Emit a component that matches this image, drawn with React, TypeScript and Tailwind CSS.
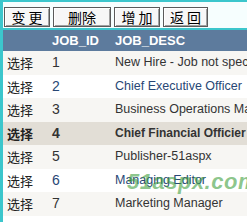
import React from 'react';

const jobs = [
  { id: 1, desc: 'New Hire - Job not specified' },
  { id: 2, desc: 'Chief Executive Officer' },
  { id: 3, desc: 'Business Operations Manager' },
  { id: 4, desc: 'Chief Financial Officier' },
  { id: 5, desc: 'Publisher-51aspx' },
  { id: 6, desc: 'Managing Editor' },
  { id: 7, desc: 'Marketing Manager' },
  { id: 8, desc: 'Productions Manager' },
];

const buttons = [
  { label: '变 更', w: 'w-[46px]' },
  { label: '删除', w: 'w-[58px]' },
  { label: '增 加', w: 'w-[46px]' },
  { label: '返 回', w: 'w-[45px]' },
];

const selectedId = 4;

export default function App() {
  return (
    <div className="relative w-[247px] h-[222px] overflow-hidden bg-white font-['Liberation_Sans','Noto_Sans_CJK_SC',sans-serif] text-[13px]">
      <div className="border-l-[3px] border-[#3cc6cc] h-full">
        {/* Toolbar */}
        <div className="border-t-2 border-b-2 border-[#3cc6cc] bg-[#f6fefe] h-[30px] flex items-start gap-[3px] pl-[1px] pt-[5px]">
          {buttons.map(b => (
            <button
              key={b.label}
              className={`${b.w} h-[20px] flex items-center justify-center bg-[#f7f7f7] border border-[#5a5a5a] shadow-[inset_1px_1px_0_#ffffff,inset_-1px_-1px_0_#a0a0a0] text-[14px] leading-none text-black font-['Noto_Sans_CJK_SC',sans-serif]`}
            >
              {b.label}
            </button>
          ))}
        </div>

        {/* Grid */}
        <div className="grid grid-cols-[45px_64px_1fr] h-[21px] bg-[#5d7b9d] text-white font-bold items-center">
          <span />
          <span className="pl-[4px]">JOB_ID</span>
          <span className="pl-[3px]">JOB_DESC</span>
        </div>
        {jobs.map((job, i) => {
          const selected = job.id === selectedId;
          const bg = selected ? 'bg-[#e2ded6] font-bold text-[#333333]' : i % 2 === 0 ? 'bg-[#f7f6f3] text-[#333333]' : 'bg-white text-[#284775]';
          return (
            <div key={job.id} className={`grid grid-cols-[45px_64px_1fr] h-[23.5px] items-center ${bg}`}>
              <span className="pl-[4px] text-[#222] font-['Noto_Sans_CJK_SC',sans-serif]">选择</span>
              <span className="pl-[4px] text-[14px]">{job.id}</span>
              <span className={`pl-[3px] whitespace-nowrap overflow-hidden ${selected ? 'text-[12px]' : 'text-[12.5px]'}`}>{job.desc}</span>
            </div>
          );
        })}
      </div>

      {/* Watermark */}
      <span className="absolute left-[127px] top-[171px] text-[22px] leading-none font-bold italic text-[#3f9f40]/60 font-['Liberation_Sans',sans-serif] tracking-[0.5px]">
        51aspx.com
      </span>
    </div>
  );
}
